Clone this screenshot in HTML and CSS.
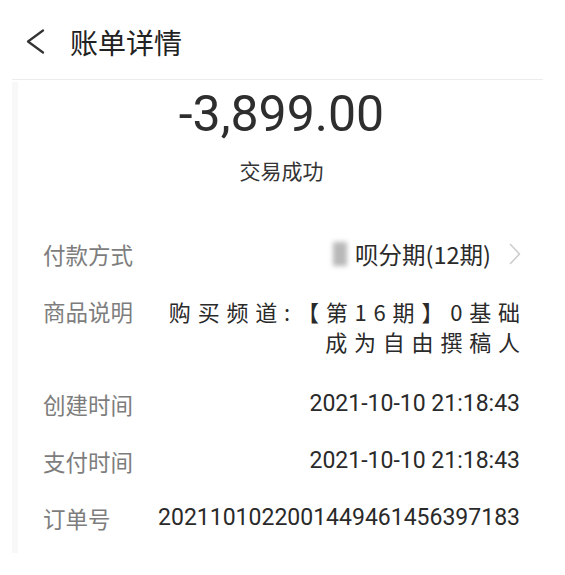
FILE: index.html
```html
<!DOCTYPE html>
<html lang="zh-CN">
<head>
<meta charset="utf-8">
<title>账单详情</title>
<link rel="stylesheet" href="styles.css">
</head>
<body>
<header class="topbar">
  <svg class="back" width="20" height="26" viewBox="0 0 20 26" aria-hidden="true">
    <path d="M17 1.5 L2 12.5 L17 23.5" fill="none" stroke="#333" stroke-width="2.2" stroke-linecap="round" stroke-linejoin="round"/>
  </svg>
  <h1 class="title">账单详情</h1>
</header>
<main class="card">
  <div class="summary">
    <div class="amount">-3,899.00</div>
    <div class="status">交易成功</div>
  </div>
  <div class="rows">
    <div class="row">
      <span class="label">付款方式</span>
      <span class="value pay">
        <span class="blur"></span><span class="pay-text">呗分期(12期)</span>
        <svg class="arrow" width="12" height="22" viewBox="0 0 12 22" aria-hidden="true">
          <path d="M1.5 1.5 L10.5 11 L1.5 20.5" fill="none" stroke="#cdcdcd" stroke-width="1.6" stroke-linecap="round" stroke-linejoin="round"/>
        </svg>
      </span>
    </div>
    <div class="row multi">
      <span class="label">商品说明</span>
      <span class="value desc">购买频道:【第16期】0基础<br>成为自由撰稿人</span>
    </div>
    <div class="row">
      <span class="label">创建时间</span>
      <span class="value num">2021-10-10 21:18:43</span>
    </div>
    <div class="row">
      <span class="label">支付时间</span>
      <span class="value num">2021-10-10 21:18:43</span>
    </div>
    <div class="row">
      <span class="label">订单号</span>
      <span class="value num">2021101022001449461456397183</span>
    </div>
  </div>
</main>
</body>
</html>
```
FILE: styles.css
```css
html, body {
  margin: 0;
  padding: 0;
  background: #ffffff;
}
body {
  font-family: "Noto Sans CJK SC", "Noto Sans", sans-serif;
  color: #2a2a2a;
  width: 565px;
}
.topbar {
  height: 79px;
  box-sizing: border-box;
  padding: 5px 0 0 26px;
  display: flex;
  align-items: center;
}
.back {
  display: block;
  flex: none;
}
.title {
  margin: 0 0 0 24px;
  font-size: 28px;
  font-weight: 400;
  line-height: 40px;
  color: #222;
}
.card {
  margin: 0 22px 0 12px;
  border-top: 1px solid #ececec;
  position: relative;
  padding: 9px 23px 20px 31px;
  background: #fff;
}
.card::before {
  content: "";
  position: absolute;
  left: 0;
  top: 2px;
  bottom: 0;
  width: 6px;
  background: #f8f8f8;
}
.summary {
  display: flex;
  flex-direction: column;
  align-items: center;
}
.amount {
  font-family: Roboto, "Liberation Sans", sans-serif;
  font-size: 50px;
  line-height: 50px;
  letter-spacing: 0;
  color: #2e2e2e;
}
.status {
  margin-top: 16px;
  font-size: 21px;
  line-height: 30px;
  color: #333;
}
.rows {
  margin-top: 54px;
  display: flex;
  flex-direction: column;
  gap: 27px;
}
.row {
  display: flex;
  justify-content: space-between;
  align-items: flex-start;
  font-size: 22px;
  line-height: 30px;
}
.row.multi {
  padding-bottom: 6px;
}
.label {
  flex: none;
  color: #7d7d7d;
  font-size: 22.5px;
}
.value {
  text-align: right;
  color: #2a2a2a;
}
.pay {
  display: flex;
  align-items: center;
  font-size: 23.5px;
}
.blur {
  display: inline-block;
  width: 14px;
  height: 24px;
  background: #b8b8b8;
  filter: blur(2.5px);
  margin-right: 8px;
}
.arrow {
  display: block;
  margin-left: 18px;
  margin-right: -1px;
}
.desc {
  letter-spacing: 6.8px;
  margin-right: -6.8px;
}
.num {
  font-family: Roboto, "Liberation Sans", sans-serif;
  font-size: 23px;
  color: #2a2a2a;
}
```
